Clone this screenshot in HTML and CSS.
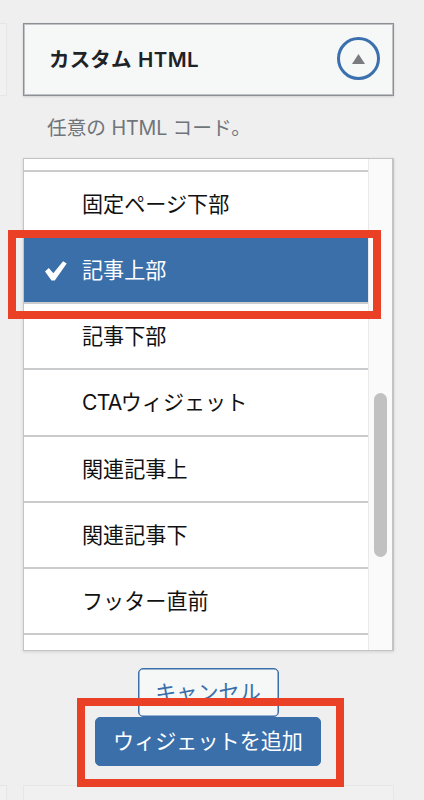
FILE: index.html
```html
<!DOCTYPE html>
<html lang="ja">
<head>
<meta charset="utf-8">
<title>ウィジェット</title>
<link rel="stylesheet" href="styles.css">
</head>
<body>
<main class="page">
  <div class="columns">
    <div class="neighbor"></div>
    <section class="widget">
      <header class="widget-top">
        <h3 class="title">カスタム <span class="latin">HTML</span></h3>
        <button class="toggle" aria-label="閉じる"><svg width="13" height="10" viewBox="0 0 13 10"><path d="M6.5 0 13 10H0z" fill="#787c7e"/></svg></button>
      </header>
      <p class="description">任意の <span class="latin">HTML</span> コード。</p>
      <div class="chooser">
        <ul class="areas">
          <li class="area partial"></li>
          <li class="area">固定ページ下部</li>
          <li class="area selected"><svg class="check" width="22" height="20" viewBox="0 0 22 20"><path d="M0 10.5 3.8 7 8.3 12.2 18.1.3 21.7 2.4 9.8 19.5H6.5z" fill="#fff"/></svg>記事上部</li>
          <li class="area">記事下部</li>
          <li class="area"><span class="cta">CTA</span>ウィジェット</li>
          <li class="area">関連記事上</li>
          <li class="area">関連記事下</li>
          <li class="area">フッター直前</li>
          <li class="area"></li>
        </ul>
        <div class="track"><div class="thumb"></div></div>
        <div class="highlight highlight-area"></div>
      </div>
      <div class="actions">
        <button class="button cancel">キャンセル</button>
        <button class="button add">ウィジェットを追加</button>
        <div class="highlight highlight-add"></div>
      </div>
    </section>
  </div>
  <div class="columns next">
    <div class="neighbor"></div>
    <div class="next-widget"></div>
  </div>
</main>
</body>
</html>
```

FILE: styles.css
```css
* { box-sizing: border-box; }
body {
  margin: 0;
  background: #efefef;
  font-family: "Liberation Sans", "Noto Sans CJK JP", sans-serif;
  color: #111;
}
.page { height: 800px; padding-top: 23px; overflow: hidden; }
.columns { display: grid; grid-template-columns: 7px 371px; column-gap: 16px; }
.neighbor {
  height: 73px;
  border: 1px solid #e6e6e6;
  border-left: 0;
  background: #f1f1f1;
}
.widget-top {
  display: flex;
  align-items: center;
  justify-content: space-between;
  height: 73px;
  padding: 1px 13px 0 25px;
  border: 1px solid #8c8f94;
  background: #f6f7f7;
  box-shadow: inset 0 0 0 1px #c0c3c6, 0 1px 2px rgba(0, 0, 0, .12);
}
.title {
  margin: 0;
  font: 700 20.5px/30px "Inter", "Noto Sans CJK JP", sans-serif;
  color: #1d2327;
  letter-spacing: .15px;
  word-spacing: 1.5px;
  white-space: nowrap;
}
.title .latin { font-weight: 600; letter-spacing: .4px; }
.toggle {
  display: flex;
  align-items: center;
  justify-content: center;
  width: 43px;
  height: 43px;
  margin-bottom: 3px;
  padding: 0;
  border: 3px solid #3b70ae;
  border-radius: 50%;
  background: transparent;
}
.description {
  margin: 17px 0 15px 24px;
  font: 400 19.7px/30px "Inter", "Noto Sans CJK JP", sans-serif;
  color: #70757b;
  white-space: nowrap;
}
.description .latin { letter-spacing: -.2px; }
.chooser {
  position: relative;
  display: flex;
  height: 493px;
  border: 1px solid #c3c4c7;
  border-right-width: 2px;
  background: #fff;
  box-shadow: 0 1px 3px rgba(0, 0, 0, .12);
}
.areas {
  flex: 1;
  height: 491px;
  margin: 0;
  padding: 0;
  overflow: hidden;
  list-style: none;
}
.area {
  display: flex;
  align-items: center;
  height: 66.15px;
  padding: 2px 0 0 58px;
  border-bottom: 2px solid #cacbcd;
  font-size: 21.1px;
  line-height: 30px;
  white-space: nowrap;
}
.partial { height: 13px; }
.selected { padding-left: 21px; background: #3b6faa; color: #fff; }
.check { margin-right: 15px; }
.cta { margin-right: -1px; font-family: "Inter", sans-serif; letter-spacing: -.7px; }
.track {
  width: 24px;
  padding: 234px 0 0 5px;
  border-left: 1px solid #e9e9e9;
  background: #fafafa;
}
.thumb { width: 13px; height: 164px; border-radius: 7px; background: #c1c1c1; }
.highlight { position: absolute; border: 8px solid #ea4025; }
.highlight-area { top: 71px; left: -16px; width: 373px; height: 89px; }
.actions {
  position: relative;
  display: flex;
  flex-direction: column;
  align-items: center;
  height: 134px;
  padding: 17px 1px 0 0;
}
.button {
  height: 49px;
  padding: 0 0 4px;
  border: 1px solid #3b6faa;
  border-radius: 5px;
  font: 400 21.1px/30px "Noto Sans CJK JP", sans-serif;
  white-space: nowrap;
}
.cancel {
  width: 141px;
  background: #f6f7f7;
  box-shadow: inset 0 0 0 .5px #3b6faa;
  color: #3b6faa;
}
.add { width: 226px; background: #3b6faa; color: #fff; }
.highlight-add { top: 47px; left: 54px; width: 267px; height: 89px; }
.next-widget { height: 73px; border: 1px solid #e6e6e6; background: #f0f0f0; }
```
